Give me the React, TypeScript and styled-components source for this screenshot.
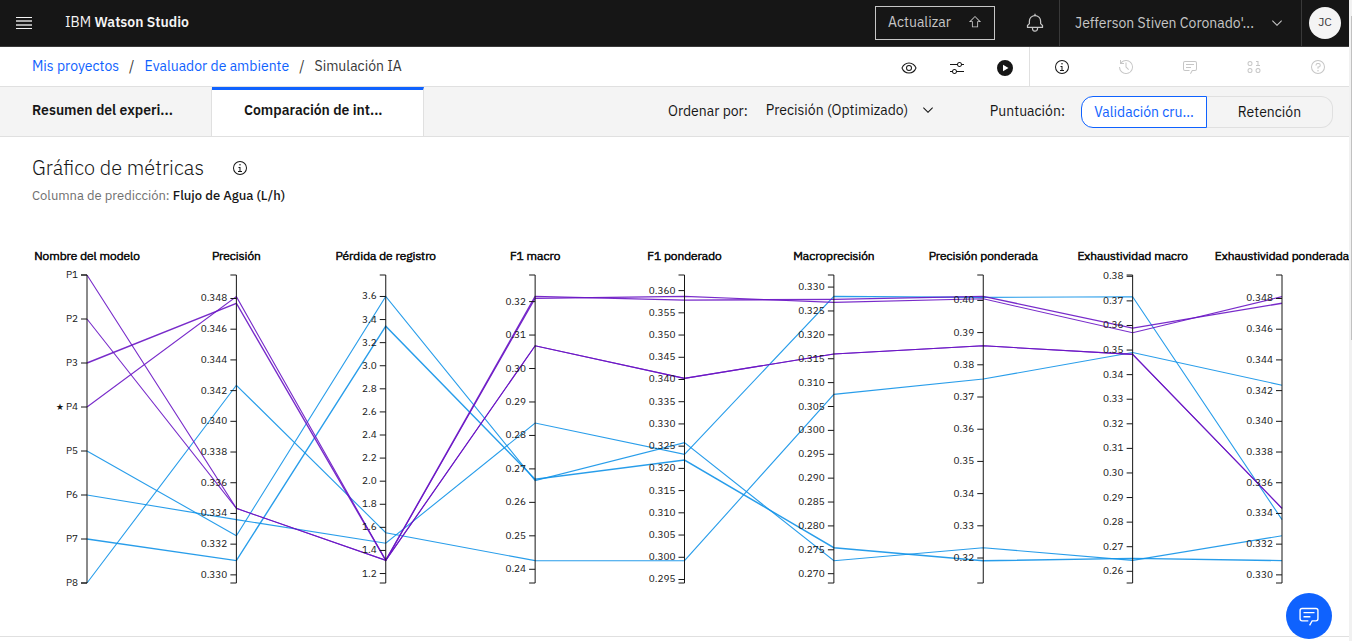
import React, { useLayoutEffect, useRef, useState } from 'react';
import styled, { createGlobalStyle } from 'styled-components';

const sans = `"IBM Plex Sans", Inter, "Liberation Sans", sans-serif`;
const blue = '#0f62fe';
const line = '#e0e0e0';

const GlobalStyle = createGlobalStyle`
  * { box-sizing: border-box; }
  body { margin: 0; background: #fff; color: #161616; font-family: ${sans}; font-size: 14px; line-height: 18px; }
  button, select { font: inherit; color: inherit; }
  h1, p { margin: 0; }
`;

const Page = styled.div`
  display: grid;
  grid-template-columns: minmax(0, 1fr) 3px;
  min-height: 100vh;
`;

const Content = styled.div`
  min-width: 0;
  display: flex;
  flex-direction: column;
`;

const ScrollTrack = styled.div`
  background: #f1f1f1;
  padding: 16px 0 0 2px;
`;

const ScrollThumb = styled.div`
  height: 324px;
  background: #c1c1c1;
`;

const Header = styled.header`
  display: flex;
  align-items: stretch;
  height: 47px;
  background: #161616;
  border-bottom: 1px solid #393939;
  color: #f4f4f4;
`;

const PlainButton = styled.button`
  display: flex;
  align-items: center;
  justify-content: center;
  padding: 0;
  border: 0;
  background: none;
`;

const MenuButton = styled(PlainButton)`
  width: 48px;
`;

const Brand = styled.a`
  margin: 13px auto auto 17px;
  color: #f4f4f4;
  text-decoration: none;
  font-size: 14px;

  strong { font-weight: 600; }
`;

const UpgradeButton = styled.button`
  display: flex;
  align-items: center;
  justify-content: space-between;
  width: 120px;
  height: 34px;
  margin: 6px 16px 0 0;
  padding: 0 12px 2px;
  background: none;
  border: 1px solid #c6c6c6;
  color: #c6c6c6;
`;

const BellButton = styled(PlainButton)`
  width: 48px;
  color: #c6c6c6;
`;

const AccountButton = styled(PlainButton)`
  justify-content: space-between;
  width: 243px;
  padding: 0 16px 0 15px;
  border: solid #393939;
  border-width: 0 1px;
  color: #c6c6c6;
`;

const Avatar = styled.button`
  width: 32px;
  height: 32px;
  margin: 7px 8px 0 7px;
  padding: 0 0 2px;
  border: 0;
  border-radius: 50%;
  background: #f4f4f4;
  color: #393939;
  font-size: 12px;
`;

const SubBar = styled.div`
  display: flex;
  height: 40px;
  border-bottom: 1px solid ${line};
`;

const Crumbs = styled.nav`
  flex: 1;
  display: flex;
  gap: 10px;
  padding: 10px 0 0 32px;
  color: #393939;

  a { color: ${blue}; text-decoration: none; }
`;

const Tools = styled.div<{ $wide?: boolean }>`
  display: flex;
  margin-right: ${p => (p.$wide ? -1 : 0)}px;
  border-left: ${p => (p.$wide ? `1px solid ${line}` : '0')};
`;

const ToolButton = styled(PlainButton)<{ $wide?: boolean; $muted?: boolean }>`
  width: ${p => (p.$wide ? 64 : 48)}px;
  padding-top: ${p => (p.$wide ? 0 : 3)}px;
  color: ${p => (p.$muted ? '#c6c6c6' : '#161616')};
`;

const TabBar = styled.div`
  display: flex;
  height: 50px;
  background: #f4f4f4;
  border-bottom: 1px solid ${line};
`;

const Tabs = styled.div`
  display: flex;
  flex: 1;
`;

const Tab = styled.button<{ $active?: boolean }>`
  width: 212px;
  padding: 0 0 6px 32px;
  text-align: left;
  font-weight: 600;
  border: 0;
  border-right: 1px solid ${line};
  border-top: 3px solid ${p => (p.$active ? blue : '#f4f4f4')};
  background: ${p => (p.$active ? '#fff' : '#f4f4f4')};
`;

const Controls = styled.div`
  display: flex;
  align-items: flex-start;
  padding-right: 16px;
`;

const ControlLabel = styled.label`
  padding-top: 15px;
`;

const SelectWrap = styled.div`
  display: grid;
  align-items: center;
  width: 204px;
  margin: 14px 20px 0 18px;

  > * { grid-area: 1 / 1; }
  svg { margin-left: 154px; pointer-events: none; }
`;

const Select = styled.select`
  appearance: none;
  width: 180px;
  padding: 0;
  border: 0;
  background: none;
`;

const Segmented = styled.div`
  display: flex;
  margin: 9px 0 0 16px;
`;

const Segment = styled.button<{ $active?: boolean }>`
  width: 126px;
  height: 32px;
  padding: 0;
  border: 1px solid ${p => (p.$active ? blue : line)};
  border-left-width: ${p => (p.$active ? 1 : 0)}px;
  border-radius: ${p => (p.$active ? '12px 0 0 12px' : '0 12px 12px 0')};
  background: ${p => (p.$active ? '#fff' : '#f4f4f4')};
  color: ${p => (p.$active ? blue : '#161616')};
`;

const Main = styled.main`
  flex: 1;
`;

const Heading = styled.div`
  display: flex;
  align-items: center;
  gap: 28px;
  padding: 18px 32px 0;

  h1 { font-size: 20px; line-height: 26px; font-weight: 300; }
`;

const Caption = styled.p`
  padding: 6px 32px 0;
  font-size: 13px;
  color: #6f6f6f;

  strong { font-weight: 500; color: #161616; }
`;

const ChartArea = styled.div`
  margin-top: 40px;
`;

const Chart = styled.svg`
  display: block;
  width: 100%;
  height: 392px;
  border-bottom: 1px solid ${line};
`;

const AxisTitle = styled.text`
  font-size: 12px;
  font-weight: 300;
  text-anchor: middle;
  fill: #161616;
  stroke: #161616;
  stroke-width: 0.7px;
`;

const TickLabel = styled.text`
  font-size: 10px;
  text-anchor: end;
  fill: #161616;
`;

const ChatButton = styled.button`
  position: fixed;
  right: 20px;
  bottom: 2px;
  width: 46px;
  height: 46px;
  display: flex;
  align-items: center;
  justify-content: center;
  padding: 0;
  border: 0;
  border-radius: 50%;
  background: ${blue};
  color: #fff;
`;

const icons = {
  info: 'M17 22V14H13V16H15V22H12V24H20V22ZM16 8a1.5 1.5 0 1 0 1.5 1.5A1.5 1.5 0 0 0 16 8ZM16 30A14 14 0 1 1 30 16 14 14 0 0 1 16 30ZM16 4A12 12 0 1 0 28 16 12 12 0 0 0 16 4Z',
  help: 'M16 2A14 14 0 1 0 30 16 14 14 0 0 0 16 2Zm0 26A12 12 0 1 1 28 16 12 12 0 0 1 16 28ZM16 22a1.5 1.5 0 1 0 1.5 1.5A1.5 1.5 0 0 0 16 22ZM17 8H15.5A4.49 4.49 0 0 0 11 12.5V13h2v-.5A2.5 2.5 0 0 1 15.5 10H17a2.5 2.5 0 0 1 0 5H15v4.5h2V17a4.5 4.5 0 0 0 0-9Z',
  bell: 'M28.7 19.3 26 16.6V13a10 10 0 0 0-9-9.95V1H15V3.05A10 10 0 0 0 6 13v3.6L3.3 19.3A1 1 0 0 0 3 20v3a1 1 0 0 0 1 1h7v.78a5.15 5.15 0 0 0 4.5 5.2A5 5 0 0 0 21 25V24h7a1 1 0 0 0 1-1V20A1 1 0 0 0 28.7 19.3ZM19 25a3 3 0 0 1-6 0V24h6Zm8-3H5V20.4L7.7 17.7A1 1 0 0 0 8 17V13a8 8 0 0 1 16 0v4a1 1 0 0 0 .3.7L27 20.4Z',
  view: 'M30.94 15.66A16.69 16.69 0 0 0 16 5 16.69 16.69 0 0 0 1.06 15.66a1 1 0 0 0 0 .68A16.69 16.69 0 0 0 16 27 16.69 16.69 0 0 0 30.94 16.34 1 1 0 0 0 30.94 15.66ZM16 25c-5.3 0-10.9-3.93-12.93-9C5.1 10.93 10.7 7 16 7s10.9 3.93 12.93 9C26.9 21.07 21.3 25 16 25ZM16 10a6 6 0 1 0 6 6A6 6 0 0 0 16 10Zm0 10a4 4 0 1 1 4-4A4 4 0 0 1 16 20Z',
  adjust: 'M30 8h-4.1c-.5-2.3-2.5-4-4.9-4s-4.4 1.7-4.9 4H2v2h14.1c.5 2.3 2.5 4 4.9 4s4.4-1.7 4.9-4H30V8zM21 12c-1.7 0-3-1.3-3-3s1.3-3 3-3 3 1.3 3 3-1.3 3-3 3zM2 24h4.1c.5 2.3 2.5 4 4.9 4s4.4-1.7 4.9-4H30v-2H15.9c-.5-2.3-2.5-4-4.9-4s-4.4 1.7-4.9 4H2v2zM11 20c1.7 0 3 1.3 3 3s-1.3 3-3 3-3-1.3-3-3 1.3-3 3-3z',
  play: 'M16 0A16 16 0 1 0 32 16 16 16 0 0 0 16 0ZM12 9.5 23 16 12 22.5Z',
  history: 'M20.59 22 15 16.41V7h2v8.58l5 5.01ZM16 2A13.94 13.94 0 0 0 6 6.23V2H4v8h8V8H7.08A12 12 0 1 1 4 16H2A14 14 0 1 0 16 2Z',
  chat: 'M17.74 30 16 29l4-7h6a2 2 0 0 0 2-2V8a2 2 0 0 0-2-2H6A2 2 0 0 0 4 8V20a2 2 0 0 0 2 2h9v2H6a4 4 0 0 1-4-4V8A4 4 0 0 1 6 4H26a4 4 0 0 1 4 4V20a4 4 0 0 1-4 4H21.16ZM8 10H24V12H8ZM8 16H18V18H8Z',
  data: 'M25 12V4h-5v2h3v6h-3v2h8v-2ZM8 4a5 5 0 1 0 0 10 5 5 0 1 0 0-10Zm0 2a3 3 0 1 1 0 6 3 3 0 1 1 0-6ZM8 18a5 5 0 1 0 0 10 5 5 0 1 0 0-10Zm0 2a3 3 0 1 1 0 6 3 3 0 1 1 0-6ZM24 18a5 5 0 1 0 0 10 5 5 0 1 0 0-10Zm0 2a3 3 0 1 1 0 6 3 3 0 1 1 0-6Z',
  chevron: 'M16 22 6 12l1.4-1.4 8.6 8.6 8.6-8.6L26 12Z',
  upgrade: 'M23 28H9V16H2L16 2 30 16H23ZM11 26H21V14h4.2L16 4.8 6.8 14H11Z',
};

function Icon({ name, size = 16 }: { name: keyof typeof icons; size?: number }) {
  return (
    <svg width={size} height={size} viewBox="0 0 32 32" fill="currentColor" aria-hidden="true">
      <path fillRule="evenodd" d={icons[name]} />
    </svg>
  );
}

type Axis = { title: string; top: number; bottom: number; first: number; last: number; step: number; digits: number };

const axes: Axis[] = [
  { title: 'Precisión', top: 0.34953, bottom: 0.32947, first: 0.33, last: 0.348, step: 0.002, digits: 3 },
  { title: 'Pérdida de registro', top: 3.786, bottom: 1.118, first: 1.2, last: 3.6, step: 0.2, digits: 1 },
  { title: 'F1 macro', top: 0.32795, bottom: 0.2359, first: 0.24, last: 0.32, step: 0.01, digits: 2 },
  { title: 'F1 ponderado', top: 0.36351, bottom: 0.29421, first: 0.295, last: 0.36, step: 0.005, digits: 3 },
  { title: 'Macroprecisión', top: 0.33253, bottom: 0.26805, first: 0.27, last: 0.33, step: 0.005, digits: 3 },
  { title: 'Precisión ponderada', top: 0.40789, bottom: 0.31224, first: 0.32, last: 0.4, step: 0.01, digits: 2 },
  { title: 'Exhaustividad macro', top: 0.38053, bottom: 0.25524, first: 0.26, last: 0.38, step: 0.01, digits: 2 },
  { title: 'Exhaustividad ponderada', top: 0.34953, bottom: 0.32947, first: 0.33, last: 0.348, step: 0.002, digits: 3 },
];

const purple = '#6914c4';
const sky = '#1192e8';

const models = [
  { name: 'P8', color: sky, values: [0.34235, 1.554, 0.24258, 0.29923, 0.30754, 0.37557, 0.34898, 0.34235] },
  { name: 'P7', color: sky, strong: true, values: [0.33093, 3.343, 0.2669, 0.32188, 0.27544, 0.31915, 0.26527, 0.33093] },
  { name: 'P6', color: sky, values: [0.3336, 1.462, 0.28371, 0.32316, 0.32805, 0.40093, 0.37166, 0.3336] },
  { name: 'P5', color: sky, values: [0.33255, 3.6, 0.2665, 0.3258, 0.27271, 0.3232, 0.26446, 0.33255] },
  { name: 'P4', color: purple, values: [0.34812, 1.314, 0.32096, 0.3587, 0.3268, 0.4005, 0.35702, 0.34812] },
  { name: 'P3', color: purple, strong: true, values: [0.34769, 1.314, 0.32155, 0.35786, 0.32743, 0.40124, 0.35893, 0.34769] },
  { name: 'P2', color: purple, values: [0.33433, 1.314, 0.3068, 0.34025, 0.31598, 0.3859, 0.34824, 0.33433] },
  { name: 'P1', color: purple, values: [0.33433, 1.314, 0.3068, 0.34025, 0.31598, 0.3859, 0.34824, 0.33433] },
];

const BEST = 'P4';
const TOP = 30;
const HEIGHT = 308;
const LEFT = 87;
const RIGHT = 67;

const modelY = (name: string) => TOP + ((Number(name[1]) - 1) * HEIGHT) / 7;
const valueY = (a: Axis, v: number) => TOP + ((a.top - v) / (a.top - a.bottom)) * HEIGHT;

function ticksOf(a: Axis) {
  const count = Math.round((a.last - a.first) / a.step);
  return Array.from({ length: count + 1 }, (_, i) => {
    const v = a.first + i * a.step;
    return { y: valueY(a, v), label: v.toFixed(a.digits) };
  });
}

function AxisGroup({ x, title, ticks }: { x: number; title: string; ticks: { y: number; label: string }[] }) {
  return (
    <g transform={`translate(${x} 0)`}>
      <AxisTitle y={15}>{title}</AxisTitle>
      <path d={`M-6 ${TOP}H0V${TOP + HEIGHT}H-6`} fill="none" stroke="#161616" />
      {ticks.map(t => (
        <g key={t.label}>
          <line x1={-6} x2={0} y1={t.y} y2={t.y} stroke="#161616" />
          <TickLabel x={-9} y={Math.round(t.y) + 3}>
            {t.label === BEST && <tspan fontSize={8}>★ </tspan>}
            {t.label}
          </TickLabel>
        </g>
      ))}
    </g>
  );
}

function MetricsChart() {
  const ref = useRef<HTMLDivElement>(null);
  const [width, setWidth] = useState(1349);

  useLayoutEffect(() => {
    const node = ref.current;
    if (!node) return;
    const measure = () => setWidth(node.clientWidth);
    measure();
    const observer = new ResizeObserver(measure);
    observer.observe(node);
    return () => observer.disconnect();
  }, []);

  const gap = (width - LEFT - RIGHT) / axes.length;
  const axisX = (i: number) => LEFT + gap * i;

  return (
    <ChartArea ref={ref}>
      <Chart role="img" aria-label="Gráfico de métricas">
        {models.map(m => (
          <polyline
            key={m.name}
            fill="none"
            stroke={m.color}
            strokeWidth={m.strong ? 1.4 : 1.1}
            strokeOpacity={0.9}
            points={[`${axisX(0)},${modelY(m.name)}`, ...m.values.map((v, i) => `${axisX(i + 1)},${valueY(axes[i], v)}`)].join(' ')}
          />
        ))}
        <AxisGroup
          x={axisX(0)}
          title="Nombre del modelo"
          ticks={models.map(m => ({ y: modelY(m.name), label: m.name }))}
        />
        {axes.map((a, i) => (
          <AxisGroup key={a.title} x={axisX(i + 1)} title={a.title} ticks={ticksOf(a)} />
        ))}
      </Chart>
    </ChartArea>
  );
}

export default function App() {
  return (
    <>
      <GlobalStyle />
      <Page>
        <Content>
          <Header>
            <MenuButton aria-label="Menú">
              <svg width="16" height="12" viewBox="0 0 16 12" aria-hidden="true">
                <path d="M0 .5H16M0 11.5H16" stroke="#f4f4f4" />
                <path d="M0 4H16M0 8H16" stroke="#a8a8a8" strokeWidth="2" />
              </svg>
            </MenuButton>
            <Brand href="#">IBM <strong>Watson Studio</strong></Brand>
            <UpgradeButton>Actualizar <Icon name="upgrade" size={14} /></UpgradeButton>
            <BellButton aria-label="Notificaciones"><Icon name="bell" size={20} /></BellButton>
            <AccountButton>Jefferson Stiven Coronado'... <Icon name="chevron" /></AccountButton>
            <Avatar>JC</Avatar>
          </Header>
          <SubBar>
            <Crumbs aria-label="Ruta">
              <a href="#">Mis proyectos</a>
              <span>/</span>
              <a href="#">Evaluador de ambiente</a>
              <span>/</span>
              <span>Simulación IA</span>
            </Crumbs>
            <Tools>
              <ToolButton aria-label="Ver"><Icon name="view" /></ToolButton>
              <ToolButton aria-label="Ajustes"><Icon name="adjust" /></ToolButton>
              <ToolButton aria-label="Ejecutar"><Icon name="play" /></ToolButton>
            </Tools>
            <Tools $wide>
              <ToolButton $wide aria-label="Información"><Icon name="info" /></ToolButton>
              <ToolButton $wide $muted aria-label="Historial"><Icon name="history" /></ToolButton>
              <ToolButton $wide $muted aria-label="Comentarios"><Icon name="chat" /></ToolButton>
              <ToolButton $wide $muted aria-label="Datos"><Icon name="data" /></ToolButton>
              <ToolButton $wide $muted aria-label="Ayuda"><Icon name="help" /></ToolButton>
            </Tools>
          </SubBar>
          <TabBar>
            <Tabs role="tablist">
              <Tab role="tab" aria-selected="false">Resumen del experi...</Tab>
              <Tab role="tab" aria-selected="true" $active>Comparación de int...</Tab>
            </Tabs>
            <Controls>
              <ControlLabel htmlFor="sort">Ordenar por:</ControlLabel>
              <SelectWrap>
                <Select id="sort"><option>Precisión (Optimizado)</option></Select>
                <Icon name="chevron" />
              </SelectWrap>
              <ControlLabel as="span" id="score">Puntuación:</ControlLabel>
              <Segmented role="group" aria-labelledby="score">
                <Segment $active aria-pressed="true">Validación cru...</Segment>
                <Segment aria-pressed="false">Retención</Segment>
              </Segmented>
            </Controls>
          </TabBar>
          <Main>
            <Heading>
              <h1>Gráfico de métricas</h1>
              <Icon name="info" />
            </Heading>
            <Caption>Columna de predicción: <strong>Flujo de Agua (L/h)</strong></Caption>
            <MetricsChart />
          </Main>
        </Content>
        <ScrollTrack aria-hidden="true"><ScrollThumb /></ScrollTrack>
      </Page>
      <ChatButton aria-label="Abrir chat"><Icon name="chat" size={22} /></ChatButton>
    </>
  );
}
